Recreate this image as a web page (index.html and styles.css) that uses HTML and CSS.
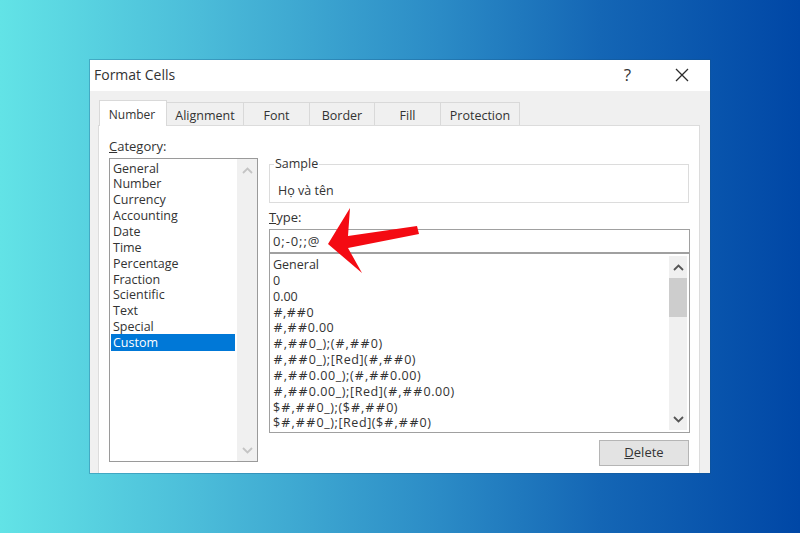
FILE: index.html
```html
<!DOCTYPE html>
<html lang="en">
<head>
<meta charset="utf-8">
<title>Format Cells</title>
<link rel="stylesheet" href="styles.css">
</head>
<body>
<div class="dialog">
  <header class="titlebar">
    <span class="title">Format Cells</span>
    <span class="help">?</span>
    <svg class="close" width="14" height="14" viewBox="0 0 14 14"><path d="M1 1 13 13M13 1 1 13" stroke="#2b2b2b" stroke-width="1.3" fill="none"/></svg>
  </header>
  <div class="client">
    <nav class="tabs">
      <span class="tab active t1">Number</span>
      <span class="tab t2">Alignment</span>
      <span class="tab t3">Font</span>
      <span class="tab t4">Border</span>
      <span class="tab t5">Fill</span>
      <span class="tab t6">Protection</span>
    </nav>
    <main class="panel">
      <section class="left">
        <div class="label catlabel"><u>C</u>ategory:</div>
        <div class="catbox">
          <ul class="cats">
            <li>General</li><li>Number</li><li>Currency</li><li>Accounting</li><li>Date</li><li>Time</li><li>Percentage</li><li>Fraction</li><li>Scientific</li><li>Text</li><li>Special</li><li class="sel">Custom</li>
          </ul>
          <div class="scroll pale">
            <svg width="11" height="7" viewBox="0 0 11 7"><path d="M1 6 5.5 1.5 10 6" stroke="#c4c4c4" stroke-width="1.8" fill="none"/></svg>
            <svg width="11" height="7" viewBox="0 0 11 7"><path d="M1 1 5.5 5.5 10 1" stroke="#c4c4c4" stroke-width="1.8" fill="none"/></svg>
          </div>
        </div>
      </section>
      <section class="right">
        <fieldset class="sample">
          <legend>Sample</legend>
          <div class="sampletext">Họ và tên</div>
        </fieldset>
        <div class="label typelabel"><u>T</u>ype:</div>
        <div class="input">0;-0;;@</div>
        <div class="fmtbox">
          <ul class="fmts">
            <li>General</li>
            <li>0</li>
            <li>0.00</li>
            <li><i>#</i>,<i>##</i>0</li>
            <li class="m"><i>#</i>,<i>##</i>0.00</li>
            <li class="w"><i>#</i>,<i>##</i>0_);(<i>#</i>,<i>##</i>0)</li>
            <li class="w"><i>#</i>,<i>##</i>0_);[Red](<i>#</i>,<i>##</i>0)</li>
            <li class="w"><i>#</i>,<i>##</i>0.00_);(<i>#</i>,<i>##</i>0.00)</li>
            <li class="w"><i>#</i>,<i>##</i>0.00_);[Red](<i>#</i>,<i>##</i>0.00)</li>
            <li class="w">$<i>#</i>,<i>##</i>0_);($<i>#</i>,<i>##</i>0)</li>
            <li class="w">$<i>#</i>,<i>##</i>0_);[Red]($<i>#</i>,<i>##</i>0)</li>
          </ul>
          <div class="scroll">
            <svg width="11" height="7" viewBox="0 0 11 7"><path d="M1 6 5.5 1.5 10 6" stroke="#555" stroke-width="1.8" fill="none"/></svg>
            <div class="thumb"></div>
            <div class="spacer"></div>
            <svg width="11" height="7" viewBox="0 0 11 7"><path d="M1 1 5.5 5.5 10 1" stroke="#555" stroke-width="1.8" fill="none"/></svg>
          </div>
        </div>
        <div class="actions"><span class="btn"><u>D</u>elete</span></div>
      </section>
    </main>
  </div>
  <svg class="arrow" width="92" height="67" viewBox="0 0 92 67"><path d="M0 37 22 1 20 29 89 19 91 27 20 41 34 66Z" fill="#f40a12"/></svg>
</div>
</body>
</html>
```
FILE: styles.css
```css
* { box-sizing: border-box; }
html, body { margin: 0; height: 100%; }
body {
  width: 800px;
  height: 533px;
  overflow: hidden;
  padding: 60px 0 0 90px;
  background: linear-gradient(90deg, #62e3e6 0%, #4bbcd9 25%, #2b8bc6 55%, #1466b5 75%, #0047a6 100%);
  font: 12.5px/15.85px "Open Sans", "Noto Sans", sans-serif;
  color: #333;
}
ul { list-style: none; margin: 0; padding: 0; }
.dialog {
  position: relative;
  width: 620px;
  height: 413px;
  background: #f0f0f0;
  display: flex;
  flex-direction: column;
  box-shadow: 0 0 0 1px rgba(20, 80, 130, .3);
}
.titlebar {
  height: 31px;
  flex: none;
  background: #fff;
  display: flex;
  align-items: center;
  padding: 0 21px 2px 4px;
}
.title { font-size: 14px; flex: 1; color: #333; }
.help { font-size: 17px; color: #333; margin-right: 44px; }
.client { flex: 1; padding: 10px 10px 0 8px; display: flex; flex-direction: column; min-height: 0; }
.tabs { display: flex; height: 24px; flex: none; align-items: flex-end; padding-left: 1px; }
.tab {
  height: 23px;
  border: 1px solid #d9d9d9;
  border-bottom: 0;
  border-left: 0;
  background: #f0f0f0;
  display: flex;
  align-items: center;
  justify-content: center;
  font-size: 12.5px;
  padding-top: 3px;
}
.tab.active { height: 26px; background: #fff; border-left: 1px solid #d9d9d9; margin-bottom: -1px; position: relative; z-index: 1; padding: 3px 2px 0 0; font-size: 12px; }
.t1 { width: 68px; }
.t2 { width: 77px; }
.t3 { width: 66px; }
.t4 { width: 65px; }
.t5 { width: 66px; }
.t6 { width: 79px; }
.panel {
  flex: 1;
  background: #fff;
  border: 1px solid #dcdcdc;
  border-bottom: 0;
  display: flex;
  gap: 11px;
  padding: 12px 9px 7px 10px;
  min-height: 0;
}
.left { width: 149px; flex: none; display: flex; flex-direction: column; padding-bottom: 4px; }
.label { height: 19px; color: #333; font-size: 13px; }
.catlabel { padding-top: 1px; }
.catbox {
  flex: 1;
  margin-top: 1px;
  border: 1px solid #9a9a9a;
  display: flex;
  min-height: 0;
}
.cats { flex: 1; padding: 1.6px 2px 1px 1px; font-size: 12.5px; }
.cats li { height: 15.85px; padding-left: 2px; white-space: nowrap; }
.cats .sel { background: #0078d7; color: #fff; height: 16.85px; margin-top: -1px; padding-top: 1px; }
.scroll {
  width: 20px;
  flex: none;
  background: #f0f0f0;
  display: flex;
  flex-direction: column;
  align-items: center;
  padding: 8px 0 7px;
  justify-content: space-between;
}
.right { flex: 1; display: flex; flex-direction: column; min-width: 0; }
.right > * { flex: none; }
.sample {
  margin: 19px 1px 0 0;
  padding: 0 0 0 8px;
  height: 46px;
  border: 1px solid #dcdcdc;
}
.sample legend { padding: 0 1px; margin-left: -4px; line-height: 14px; font-size: 12.5px; }
.sampletext { margin-top: 12px; }
.typelabel { margin-top: 6px; height: 20px; padding-top: 1px; }
.input {
  height: 24px;
  border: 1px solid #a0a0a0;
  padding: 4px 3px;
  font-size: 13px;
  letter-spacing: .9px;
}
.fmtbox {
  height: 180px;
  border: 1px solid #a0a0a0;
  display: flex;
  overflow: hidden;
}
.fmts { flex: 1; padding: 3px 3px; font-size: 12.5px; white-space: nowrap; }
.fmts li { height: 15.85px; }
.fmts .m { letter-spacing: .35px; }
.fmts .w { letter-spacing: .58px; }
.fmts i { font: normal 12px/15.85px "DejaVu Sans", sans-serif; }
.fmtbox .scroll { margin: 2px; padding: 8px 0 7px; justify-content: flex-start; width: 18px; }
.thumb { width: 18px; height: 39px; background: #cdcdcd; margin-top: 7px; }
.spacer { flex: 1; }
.actions { display: flex; justify-content: flex-end; margin-top: 7px; padding-right: 1px; }
.btn {
  width: 90px;
  height: 26px;
  border: 1px solid #b5b5b5;
  background: #e3e3e3;
  display: flex;
  align-items: center;
  justify-content: center;
  font-size: 13px;
}
.arrow { position: absolute; left: 238px; top: 147px; }
```
